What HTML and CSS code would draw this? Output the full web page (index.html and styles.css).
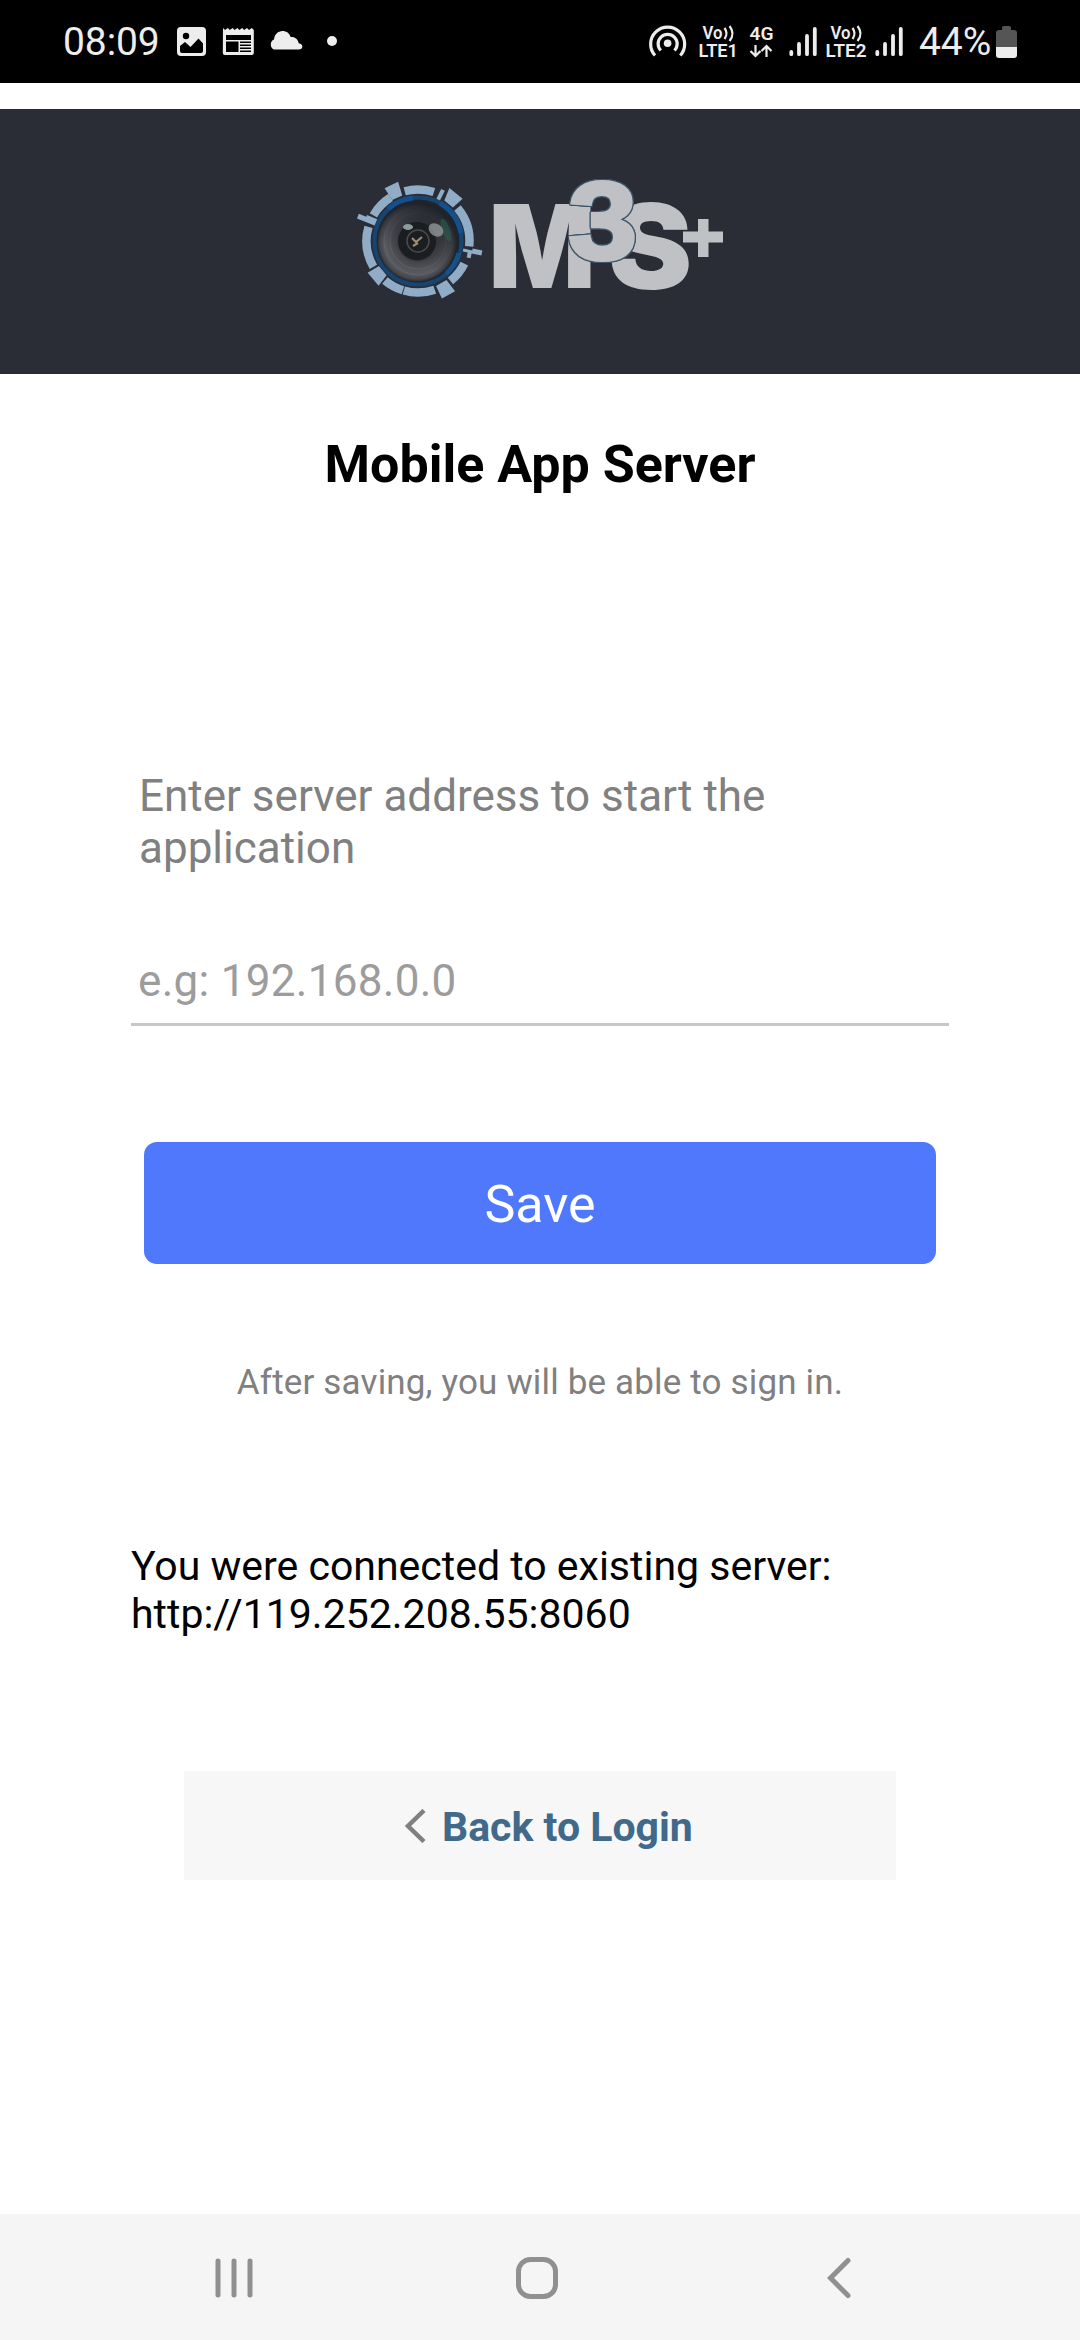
FILE: index.html
```html
<!DOCTYPE html>
<html lang="en">
<head>
<meta charset="utf-8">
<title>Mobile App Server</title>
<link rel="stylesheet" href="styles.css">
</head>
<body>
<div class="screen">
  <header class="status">
    <span class="clock">08:09</span>
    <svg class="status-left" width="162" height="40" viewBox="176 22 162 40" fill="#ededed">
      <path fill-rule="evenodd" d="M181 27h21q4 0 4 4v21q0 4-4 4h-21q-4 0-4-4V31q0-4 4-4zM180 46l5-4 5.500 5 8-8.500 4.500 5V51q0 2-2 2h-19q-2 0-2-2z"/>
      <circle cx="186" cy="36" r="3.200" fill="#000"/>
      <path fill-rule="evenodd" d="M223 28l2 2 2.800-2 2 2 2.800-2 2 2 2.800-2 2 2 2.800-2 2 2 2.800-2 2 2 2.800-2 2 2V53q0 2-2 2h-27q-2 0-2-2zM226 35v5h25v-5zM226 41.500V52h12.500V41.500zM240 41.500v1.500h11v-1.500zM240 44.500v1.500h11v-1.500zM240 47.500v1.500h11v-1.500zM240 50.500v1.500h11v-1.500z"/>
      <path d="M274 49.500a5.500 5.500 0 0 1 0-10c.5-5 4-8.500 8.500-8.500 4 0 7 2.300 8.200 6 4-.5 7.200 2 8 6.200 5 .8 4.800 6.300 0 6.300z"/>
      <circle cx="332" cy="41" r="5"/>
    </svg>
    <svg class="status-right" width="256" height="40" viewBox="648 22 256 40" fill="#ededed">
      <g fill="none" stroke="#ededed" stroke-width="3.200">
        <path d="M655 55.500a17 17 0 1 1 25.300 0"/>
        <path d="M660.800 50.500a9.500 9.500 0 1 1 13.700 0"/>
      </g>
      <circle cx="667.600" cy="43.300" r="3.800"/>
      <g class="tiny">
        <text x="702.500" y="39" textLength="20" lengthAdjust="spacingAndGlyphs">Vo</text>
        <text x="698.500" y="57" textLength="39.500" lengthAdjust="spacingAndGlyphs">LTE1</text>
        <text x="749.500" y="40" textLength="24" lengthAdjust="spacingAndGlyphs">4G</text>
        <text x="830.500" y="39" textLength="20" lengthAdjust="spacingAndGlyphs">Vo</text>
        <text x="825.500" y="57" textLength="41" lengthAdjust="spacingAndGlyphs">LTE2</text>
      </g>
      <g fill="none" stroke="#ededed" stroke-width="2.200">
        <path d="M724.500 28q4 5.500 0 11M729.500 26q6 7.500 0 15"/>
        <path d="M852.500 28q4 5.500 0 11M857.500 26q6 7.500 0 15"/>
        <path d="M755.500 45v11M750.500 51l5 5 5-5M766.500 57V46M761.500 51l5-5 5 5"/>
      </g>
      <g stroke="#ededed" stroke-width="3.800" stroke-linecap="round">
        <path d="M791.300 52v2.200M799 44v10.200M807 36v18.200M814.800 29v25.200"/>
        <path d="M877.300 52v2.200M885 44v10.200M893 36v18.200M900.800 29v25.200"/>
      </g>
    </svg>
    <span class="percent">44%</span>
    <svg class="battery" width="21" height="34" viewBox="0 0 21 34">
      <path fill="#555" d="M0 22V8q0-3 3-3h3V3q0-2 2-2h5q2 0 2 2v2h3q3 0 3 3v14z"/>
      <path fill="#ededed" d="M0 22h21v8q0 3-3 3H3q-3 0-3-3z"/>
    </svg>
  </header>

  <div class="banner">
    <svg class="logo" width="400" height="150" viewBox="0 0 400 150">
      <defs>
        <radialGradient id="lens">
          <stop offset="0" stop-color="#222326"/>
          <stop offset=".4" stop-color="#1d1f22"/>
          <stop offset=".5" stop-color="#44454a"/>
          <stop offset=".8" stop-color="#5a5b61"/>
          <stop offset=".93" stop-color="#45464c"/>
          <stop offset="1" stop-color="#23262e"/>
        </radialGradient>
        <linearGradient id="shade" x1="0" y1="1" x2=".5" y2="0">
          <stop offset=".4" stop-color="#1c1f26" stop-opacity="0"/>
          <stop offset="1" stop-color="#1c1f26" stop-opacity=".85"/>
        </linearGradient>
      </defs>
      <g transform="translate(78 76)">
        <g fill="none" stroke="#91acc6" stroke-width="8.500">
          <circle r="51.500" pathLength="360" stroke-dasharray="33 327" transform="rotate(-105)"/>
          <circle r="51.500" pathLength="360" stroke-dasharray="28 332" transform="rotate(-150)"/>
          <circle r="51.500" pathLength="360" stroke-dasharray="46 314" transform="rotate(150)"/>
          <circle r="51.500" pathLength="360" stroke-dasharray="23 337" transform="rotate(107)"/>
          <circle r="51.500" pathLength="360" stroke-dasharray="35 325" transform="rotate(71)"/>
          <circle r="51.500" pathLength="360" stroke-dasharray="25 335" transform="rotate(26)"/>
          <circle r="51.500" pathLength="360" stroke-dasharray="46 314" transform="rotate(-40)"/>
        </g>
        <g fill="#91acc6">
          <path transform="rotate(-115)" d="M48-6l14-2v15l-14-2z"/>
          <path transform="rotate(-51)" d="M48-5l13-4v17l-13-2z"/>
          <path transform="rotate(140)" d="M46-6l13-3v17l-13-2z"/>
          <path transform="rotate(61)" d="M48-6l14-2v15l-14-1z"/>
          <path transform="rotate(-158)" d="M46-2h19v5h-8v2h-11z"/>
          <path transform="rotate(12)" d="M46-2h9v-2h10v5h-10v5h-4v-5h-5z"/>
          <path transform="rotate(-64)" d="M46-2h11v4h-11z"/>
        </g>
        <circle r="43.500" fill="#20242c" stroke="#184470" stroke-width="4"/>
        <path d="M-30-32A44 44 0 0 1-5-43M28 33A44 44 0 0 0 41 12M22-38A44 44 0 0 1 43-8" fill="none" stroke="#14508c" stroke-width="5"/>
        <circle r="40" cx="-1" cy="1" fill="url(#lens)"/>
        <g fill="none" stroke="#74757a" stroke-width=".8" opacity=".5">
          <circle r="34"/><circle r="28"/>
        </g>
        <circle r="40" cx="-1" cy="1" fill="url(#shade)"/>
        <circle r="19" cx="-1" fill="#1b1e20"/>
        <circle r="11" fill="none" stroke="#494b4a" stroke-width="1.500"/>
        <ellipse cx="28" cy="-11" rx="4" ry="12" fill="#27684f" opacity=".5" transform="rotate(-20 28 -11)"/>
        <ellipse cx="18" cy="-11" rx="8" ry="6" fill="#a9afae" opacity=".65" transform="rotate(35 18 -11)"/>
        <ellipse cx="-10" cy="-14" rx="5" ry="3" fill="#a8bbb9" opacity=".8"/>
        <path d="M-6-3l4 4 6-5M-5 5l5-3" fill="none" stroke="#a08a70" stroke-width="2.200"/>
      </g>
      <g class="wordmark">
        <text transform="translate(148.500 122.500) scale(.975 1)">M</text>
        <text transform="translate(268 123.500) scale(1.100 1.020)">S</text>
        <g class="three">
          <text transform="translate(228.500 94) scale(1.120 1)">3</text>
        </g>
      </g>
      <path fill="#bfc1c4" d="M358 54h10.500v12.500H383v11h-14.500V92H358V77.500h-15v-11h15z"/>
    </svg>
  </div>

  <main class="content">
    <h1 class="title">Mobile App Server</h1>
    <label class="prompt" for="address">Enter server address to start the application</label>
    <input class="address" id="address" type="text" placeholder="e.g: 192.168.0.0">
    <button class="save">Save</button>
    <p class="note">After saving, you will be able to sign in.</p>
    <p class="existing">You were connected to existing server: <br>http://119.252.208.55:8060</p>
    <a class="back">
      <svg width="22" height="34" viewBox="0 0 22 34"><path d="M20 1.500L4 17l16 15.500" fill="none" stroke="#808080" stroke-width="4.500"/></svg>
      <span class="back-text">Back to Login</span>
    </a>
  </main>

  <nav class="nav">
    <svg width="40" height="42" viewBox="0 0 40 42"><path d="M4 4v34M20 4v34M36 4v34"/></svg>
    <svg class="home" width="42" height="42" viewBox="0 0 42 42"><rect x="2.500" y="2.500" width="37" height="37" rx="12"/></svg>
    <svg width="24" height="42" viewBox="0 0 24 42"><path d="M21 3.500L3.500 21 21 38.500"/></svg>
  </nav>
</div>
</body>
</html>
```

FILE: styles.css
```css
* { box-sizing: border-box; }

body {
  margin: 0;
  background: #fff;
  font-family: Roboto, "Liberation Sans", sans-serif;
}

.screen {
  width: 1080px;
  height: 2340px;
  display: flex;
  flex-direction: column;
}

.status {
  height: 83px;
  background: #000;
  color: #ededed;
  display: flex;
  align-items: center;
  padding: 0 63px 0 63px;
  font-size: 39px;
  letter-spacing: -0.1px;
}

.clock { width: 113px; }
.status-right { margin-left: auto; }
.percent { width: 77px; padding-left: 15px; box-sizing: content-box; }
.tiny { font-size: 18px; font-weight: 600; letter-spacing: 0; }

.banner {
  height: 265px;
  margin-top: 26px;
  padding-top: 56px;
  background: #2a2d36;
}

.logo { display: block; margin: 0 auto; overflow: visible; }

.wordmark {
  font-family: Inter, "Liberation Sans", sans-serif;
  font-weight: 900;
  font-size: 115px;
  fill: #bfc1c4;
}

/* The light stroke fattens the digit; the shadows trace its dark rim. */
.three {
  font-family: "Liberation Sans", Arial, sans-serif;
  font-weight: 700;
  font-size: 110px;
  stroke: #bfc1c4;
  stroke-width: 4px;
  filter: drop-shadow(1px 0 0 #3b5468) drop-shadow(-1px 0 0 #3b5468)
          drop-shadow(0 1px 0 #3b5468) drop-shadow(0 -1px 0 #3b5468);
}

.content {
  flex: 1;
  display: flex;
  flex-direction: column;
  padding: 61px 131px 0;
}

.title {
  margin: 0;
  font-size: 52px;
  line-height: 60px;
  font-weight: 700;
  text-align: center;
  color: #000;
}

.prompt {
  margin-top: 275px;
  padding: 0 8px;
  font-size: 44px;
  line-height: 52px;
  color: #808080;
}

.address {
  height: 71px;
  margin-top: 81px;
  padding: 0 7px 16px;
  border: 0;
  border-bottom: 3px solid #c7c7c7;
  background: none;
  font: 44px/52px Roboto, sans-serif;
  letter-spacing: 0.3px;
}

.address::placeholder { color: #9c9c9c; opacity: 1; }

.save {
  height: 122px;
  margin: 116px 13px 0;
  padding: 4px 0 0;
  border: 0;
  border-radius: 13px;
  background: #4f78fc;
  color: #fff;
  font: 52px/60px Roboto, sans-serif;
}

.note {
  margin: 98px 0 0;
  font-size: 35px;
  line-height: 42px;
  letter-spacing: 0.16px;
  text-align: center;
  color: #808080;
}

.existing {
  margin: 138px 0 0;
  font-size: 41px;
  line-height: 48px;
  color: #000;
}

.back {
  height: 109px;
  margin: 133px 53px 0;
  background: #f7f7f7;
  display: flex;
  align-items: center;
  padding-left: 220px;
  gap: 16px;
}

.back-text {
  padding-top: 2px;
  font-size: 41px;
  font-weight: 700;
  color: #41698a;
}

.nav {
  height: 126px;
  background: #f5f5f5;
  display: flex;
  align-items: center;
  justify-content: space-between;
  padding: 2px 229px 0 214px;
}

.nav .home { margin-right: 8px; }

.nav svg {
  fill: none;
  stroke: #909090;
  stroke-width: 5px;
  stroke-linecap: round;
  stroke-linejoin: miter;
}
```
